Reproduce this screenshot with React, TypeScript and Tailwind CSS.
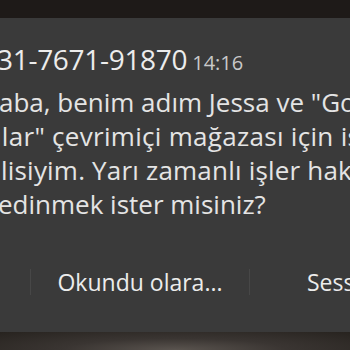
import React from "react";

const lines: { text: string; offset: string }[] = [
  { text: "aba, benim adım Jessa ve \"Golden", offset: "ml-[-1px]" },
  { text: "ılar\" çevrimiçi mağazası için işe", offset: "ml-[-5px] tracking-[0.3px]" },
  { text: "lisiyim. Yarı zamanlı işler hakkında", offset: "ml-[1px] tracking-[0.2px]" },
  { text: "edinmek ister misiniz?", offset: "ml-[-2px]" },
];

export default function App() {
  return (
    <div className="w-[350px] h-[350px] overflow-hidden flex flex-col bg-[#1c1917] font-['Open_Sans','Noto_Sans',sans-serif]">
      {/* dark strip above the card */}
      <div className="h-[18px] shrink-0 bg-[#1e1a18]" />

      {/* notification card */}
      <div className="h-[314px] shrink-0 flex flex-col bg-[#3a3a3a] overflow-hidden">
        <div className="pt-[24px] flex items-baseline gap-[5px] whitespace-nowrap ml-[-3px]">
          <span className="text-[28px] leading-[34px] text-[#ececec] tracking-[-0.3px]">31-7671-91870</span>
          <span className="text-[20px] leading-[34px] text-[#c9c9c9]">14:16</span>
        </div>

        <div className="mt-[5px] flex flex-col text-[26px] leading-[34px] text-[#e4e4e4] whitespace-nowrap">
          {lines.map((l, i) => (
            <span key={i} className={l.offset}>
              {l.text}
            </span>
          ))}
        </div>

        {/* actions */}
        <div className="mt-[36px] h-[50px] flex items-center text-[23px] text-[#ececec] whitespace-nowrap">
          <div className="w-[30px] shrink-0" />
          <div className="w-px h-[26px] shrink-0 bg-[#474747]" />
          <div className="w-[218px] shrink-0 flex justify-center">Okundu olara...</div>
          <div className="w-px h-[26px] shrink-0 bg-[#474747]" />
          <div className="ml-[57px] shrink-0">Sessize al</div>
        </div>
      </div>

      {/* blurred background below */}
      <div className="flex-1 bg-[radial-gradient(ellipse_at_50%_100%,#5a544f_0%,#3a3532_45%,#27231f_100%)]" />
    </div>
  );
}
